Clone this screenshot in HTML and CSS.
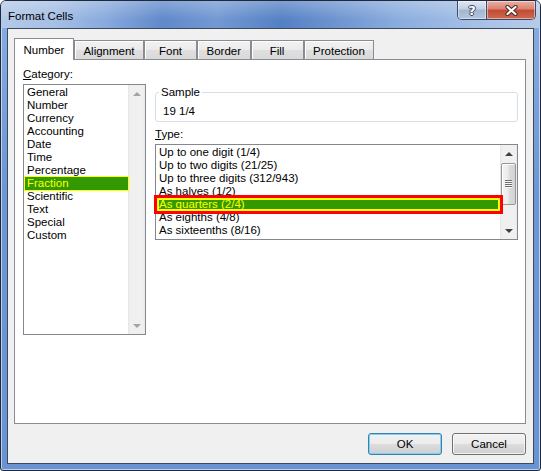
FILE: index.html
```html
<!DOCTYPE html>
<html lang="en">

<head>
    <meta charset="UTF-8">
    <meta name="viewport" content="width=device-width, initial-scale=1.0">
    <title>Format Cells</title>
    <link rel="stylesheet" href="styles.css">
</head>

<body>
    <div class="window">
        <div class="titlebar">
            <span class="title">Format Cells</span>
            <div class="caption-buttons">
                <div class="caption-btn help-btn">?</div>
                <div class="caption-btn close-btn">
                    <svg width="13" height="11" viewBox="0 0 13 11">
                        <path d="M2.5 2 L10.5 9 M10.5 2 L2.5 9" stroke="#4a2a24" stroke-width="4.2" stroke-linecap="round" fill="none" />
                        <path d="M2.5 2 L10.5 9 M10.5 2 L2.5 9" stroke="#ffffff" stroke-width="2.2" stroke-linecap="round" fill="none" />
                    </svg>
                </div>
            </div>
        </div>

        <div class="frame">
            <div class="client">
                <div class="tabs">
                    <div class="tab active">Number</div>
                    <div class="tab">Alignment</div>
                    <div class="tab">Font</div>
                    <div class="tab">Border</div>
                    <div class="tab">Fill</div>
                    <div class="tab">Protection</div>
                </div>

                <div class="panel">
                    <div class="category">
                        <div class="label"><u>C</u>ategory:</div>
                        <div class="listbox category-list">
                            <ul class="items">
                                <li>General</li>
                                <li>Number</li>
                                <li>Currency</li>
                                <li>Accounting</li>
                                <li>Date</li>
                                <li>Time</li>
                                <li>Percentage</li>
                                <li class="selected">Fraction</li>
                                <li>Scientific</li>
                                <li>Text</li>
                                <li>Special</li>
                                <li>Custom</li>
                            </ul>
                            <div class="scrollbar disabled">
                                <div class="sb-btn"><span class="arrow-up"></span></div>
                                <div class="sb-track"></div>
                                <div class="sb-btn"><span class="arrow-down"></span></div>
                            </div>
                        </div>
                    </div>

                    <div class="details">
                        <fieldset class="sample">
                            <legend>Sample</legend>
                            <div class="sample-value">19 1/4</div>
                        </fieldset>

                        <div class="label"><u>T</u>ype:</div>
                        <div class="listbox type-list">
                            <ul class="items">
                                <li>Up to one digit (1/4)</li>
                                <li>Up to two digits (21/25)</li>
                                <li>Up to three digits (312/943)</li>
                                <li>As halves (1/2)</li>
                                <li class="selected marked">As quarters (2/4)</li>
                                <li>As eighths (4/8)</li>
                                <li>As sixteenths (8/16)</li>
                            </ul>
                            <div class="scrollbar">
                                <div class="sb-btn"><span class="arrow-up"></span></div>
                                <div class="sb-thumb"><span class="grip"></span></div>
                                <div class="sb-track"></div>
                                <div class="sb-btn"><span class="arrow-down"></span></div>
                            </div>
                        </div>
                    </div>
                </div>

                <div class="buttons">
                    <button class="btn default">OK</button>
                    <button class="btn">Cancel</button>
                </div>
            </div>
        </div>
    </div>
</body>

</html>
```

FILE: styles.css
```css
/* Basic Reset */
* {
    box-sizing: border-box;
}

html,
body {
    margin: 0;
    padding: 0;
    width: 541px;
    height: 471px;
    overflow: hidden;
    background: #ffffff;
    font-family: "Liberation Sans", Arial, sans-serif;
    font-size: 11.5px;
    color: #000000;
}

/* Window frame */
.window {
    width: 541px;
    height: 471px;
    display: flex;
    flex-direction: column;
    border: 1px solid #1d2a3e;
    border-radius: 6px 6px 3px 3px;
    background: linear-gradient(to bottom, #8aaee0 0%, #6d96d4 40%, #6a93d2 100%);
    box-shadow: inset 0 0 0 1px rgba(255, 255, 255, 0.55);
    overflow: hidden;
}

.titlebar {
    height: 27px;
    flex-shrink: 0;
    display: flex;
    justify-content: space-between;
    align-items: flex-start;
    padding: 0 4px 0 7px;
    background:
        linear-gradient(to bottom, rgba(255, 255, 255, 0.25), rgba(255, 255, 255, 0) 70%),
        linear-gradient(to right, #b3c9e8 0%, #a6bfe5 10%, #86a8dc 20%, #5f89ca 30%, #7399d3 40%, #5480c4 52%, #6d94d0 62%, #8badde 74%, #a6c0e6 88%, #b6cbe9 100%);
}

.title {
    margin-top: 9px;
    line-height: 13px;
    color: #000000;
}

/* Help / close buttons */
.caption-buttons {
    display: flex;
    height: 19px;
    border: 1px solid #3b4a66;
    border-top: none;
    border-radius: 0 0 5px 5px;
    overflow: hidden;
}

.caption-btn {
    height: 100%;
    display: flex;
    align-items: center;
    justify-content: center;
    box-shadow: inset 0 0 0 1px rgba(255, 255, 255, 0.45);
}

.help-btn {
    width: 29px;
    border-right: 1px solid #3b4a66;
    background: linear-gradient(to bottom, #dfe7f2 0%, #c2d0e4 45%, #a2b5d1 50%, #b4c6de 100%);
    color: #ffffff;
    font-family: "DejaVu Sans", sans-serif;
    font-weight: bold;
    font-size: 13px;
    text-shadow: 1px 0 0 #3a465a, -1px 0 0 #3a465a, 0 1px 0 #3a465a, 0 -1px 0 #3a465a;
}

.close-btn {
    width: 48px;
    background: linear-gradient(to bottom, #eab0a3 0%, #d98170 45%, #c24a32 50%, #cf6a50 100%);
}

/* Client area */
.frame {
    flex: 1;
    display: flex;
    padding: 0 6px 6px;
}

.client {
    flex: 1;
    display: flex;
    flex-direction: column;
    background: #f0f0f0;
    border: 1px solid #3d4a5e;
    padding: 9px 7px 8px 6px;
}

/* Tabs */
.tabs {
    display: flex;
    align-items: flex-end;
    height: 21px;
    flex-shrink: 0;
}

.tab {
    position: relative;
    height: 19px;
    min-width: 53px;
    padding: 4px 8.5px 0;
    line-height: 13px;
    text-align: center;
    border: 1px solid #898c95;
    border-bottom: none;
    background: linear-gradient(to bottom, #f2f2f2 0%, #ebebeb 50%, #dfdfdf 51%, #d9d9d9 100%);
    box-shadow: inset 1px 1px 0 #ffffff;
}

.tab.active {
    height: 22px;
    margin-bottom: -1px;
    padding-top: 5px;
    background: #ffffff;
    box-shadow: none;
    z-index: 1;
}

.panel {
    flex: 1;
    display: flex;
    align-items: flex-start;
    background: #ffffff;
    border: 1px solid #898c95;
    padding: 8px 7px 0 8px;
}

.label {
    line-height: 13px;
}

/* Left column */
.category {
    width: 123px;
    flex-shrink: 0;
}

.listbox {
    display: flex;
    margin-top: 3px;
    background: #ffffff;
    border: 1px solid #828790;
}

.category-list {
    height: 251px;
}

.items {
    flex: 1;
    list-style: none;
    margin: 0;
    padding: 1px 0 0;
}

.items li {
    position: relative;
    height: 13px;
    line-height: 13px;
    margin-left: 1px;
    padding-left: 2px;
    white-space: nowrap;
}

.items li.selected {
    background: #339900;
    color: #ffff00;
    outline: 1px solid #ffff00;
    z-index: 1;
}

.items li.marked {
    outline: none;
    box-shadow: inset 0 0 0 2px #ffff00, 0 0 0 3px #ff0000;
}

/* Scrollbars */
.scrollbar {
    width: 17px;
    flex-shrink: 0;
    display: flex;
    flex-direction: column;
    background: linear-gradient(to right, #e4e4e4 0, #f0f0f0 2px, #f0f0f0 15px, #e8e8e8 100%);
}

.sb-btn {
    height: 17px;
    display: flex;
    align-items: center;
    justify-content: center;
}

.sb-track {
    flex: 1;
}

.arrow-up,
.arrow-down {
    width: 0;
    height: 0;
    border-left: 4px solid transparent;
    border-right: 4px solid transparent;
}

.arrow-up {
    border-bottom: 4px solid #3f3f3f;
}

.arrow-down {
    border-top: 4px solid #3f3f3f;
}

.scrollbar.disabled .arrow-up {
    border-bottom-color: #a3a3a3;
}

.scrollbar.disabled .arrow-down {
    border-top-color: #a3a3a3;
}

.sb-thumb {
    height: 42px;
    margin: 1px 1px 0;
    display: flex;
    align-items: center;
    justify-content: center;
    border: 1px solid #979797;
    border-radius: 2px;
    background: linear-gradient(to right, #f4f4f4 0%, #ececec 45%, #dcdcdc 55%, #d3d3d3 100%);
    box-shadow: inset 1px 1px 0 #ffffff;
}

.grip {
    width: 7px;
    height: 8px;
    background: repeating-linear-gradient(to bottom, #6f6f6f 0, #6f6f6f 1px, #f6f6f6 1px, #f6f6f6 2px);
}

/* Right column */
.details {
    flex: 1;
    margin-left: 9px;
}

.sample {
    margin: 18px 0 0;
    padding: 6px 7px 3px;
    border: 1px solid #d5dfe5;
    border-radius: 3px;
    min-width: 0;
}

.sample legend {
    margin-left: -4px;
    padding: 0 2px;
    line-height: 13px;
}

.sample-value {
    line-height: 13px;
}

.details .label {
    margin-top: 6px;
}

.type-list {
    height: 96px;
}

/* Dialog buttons */
.buttons {
    display: flex;
    justify-content: flex-end;
    gap: 10px;
    margin-top: 9px;
    flex-shrink: 0;
}

.btn {
    width: 74px;
    height: 22px;
    padding: 0;
    font-family: inherit;
    font-size: 11.5px;
    color: #000000;
    border: 1px solid #707070;
    border-radius: 3px;
    background: linear-gradient(to bottom, #f2f2f2 0%, #ebebeb 50%, #dddddd 51%, #cfcfcf 100%);
    box-shadow: inset 0 0 0 1px rgba(255, 255, 255, 0.7);
}

.btn.default {
    border-color: #3c7fb1;
    box-shadow: inset 0 0 0 1px #7fd0f4;
}
```
